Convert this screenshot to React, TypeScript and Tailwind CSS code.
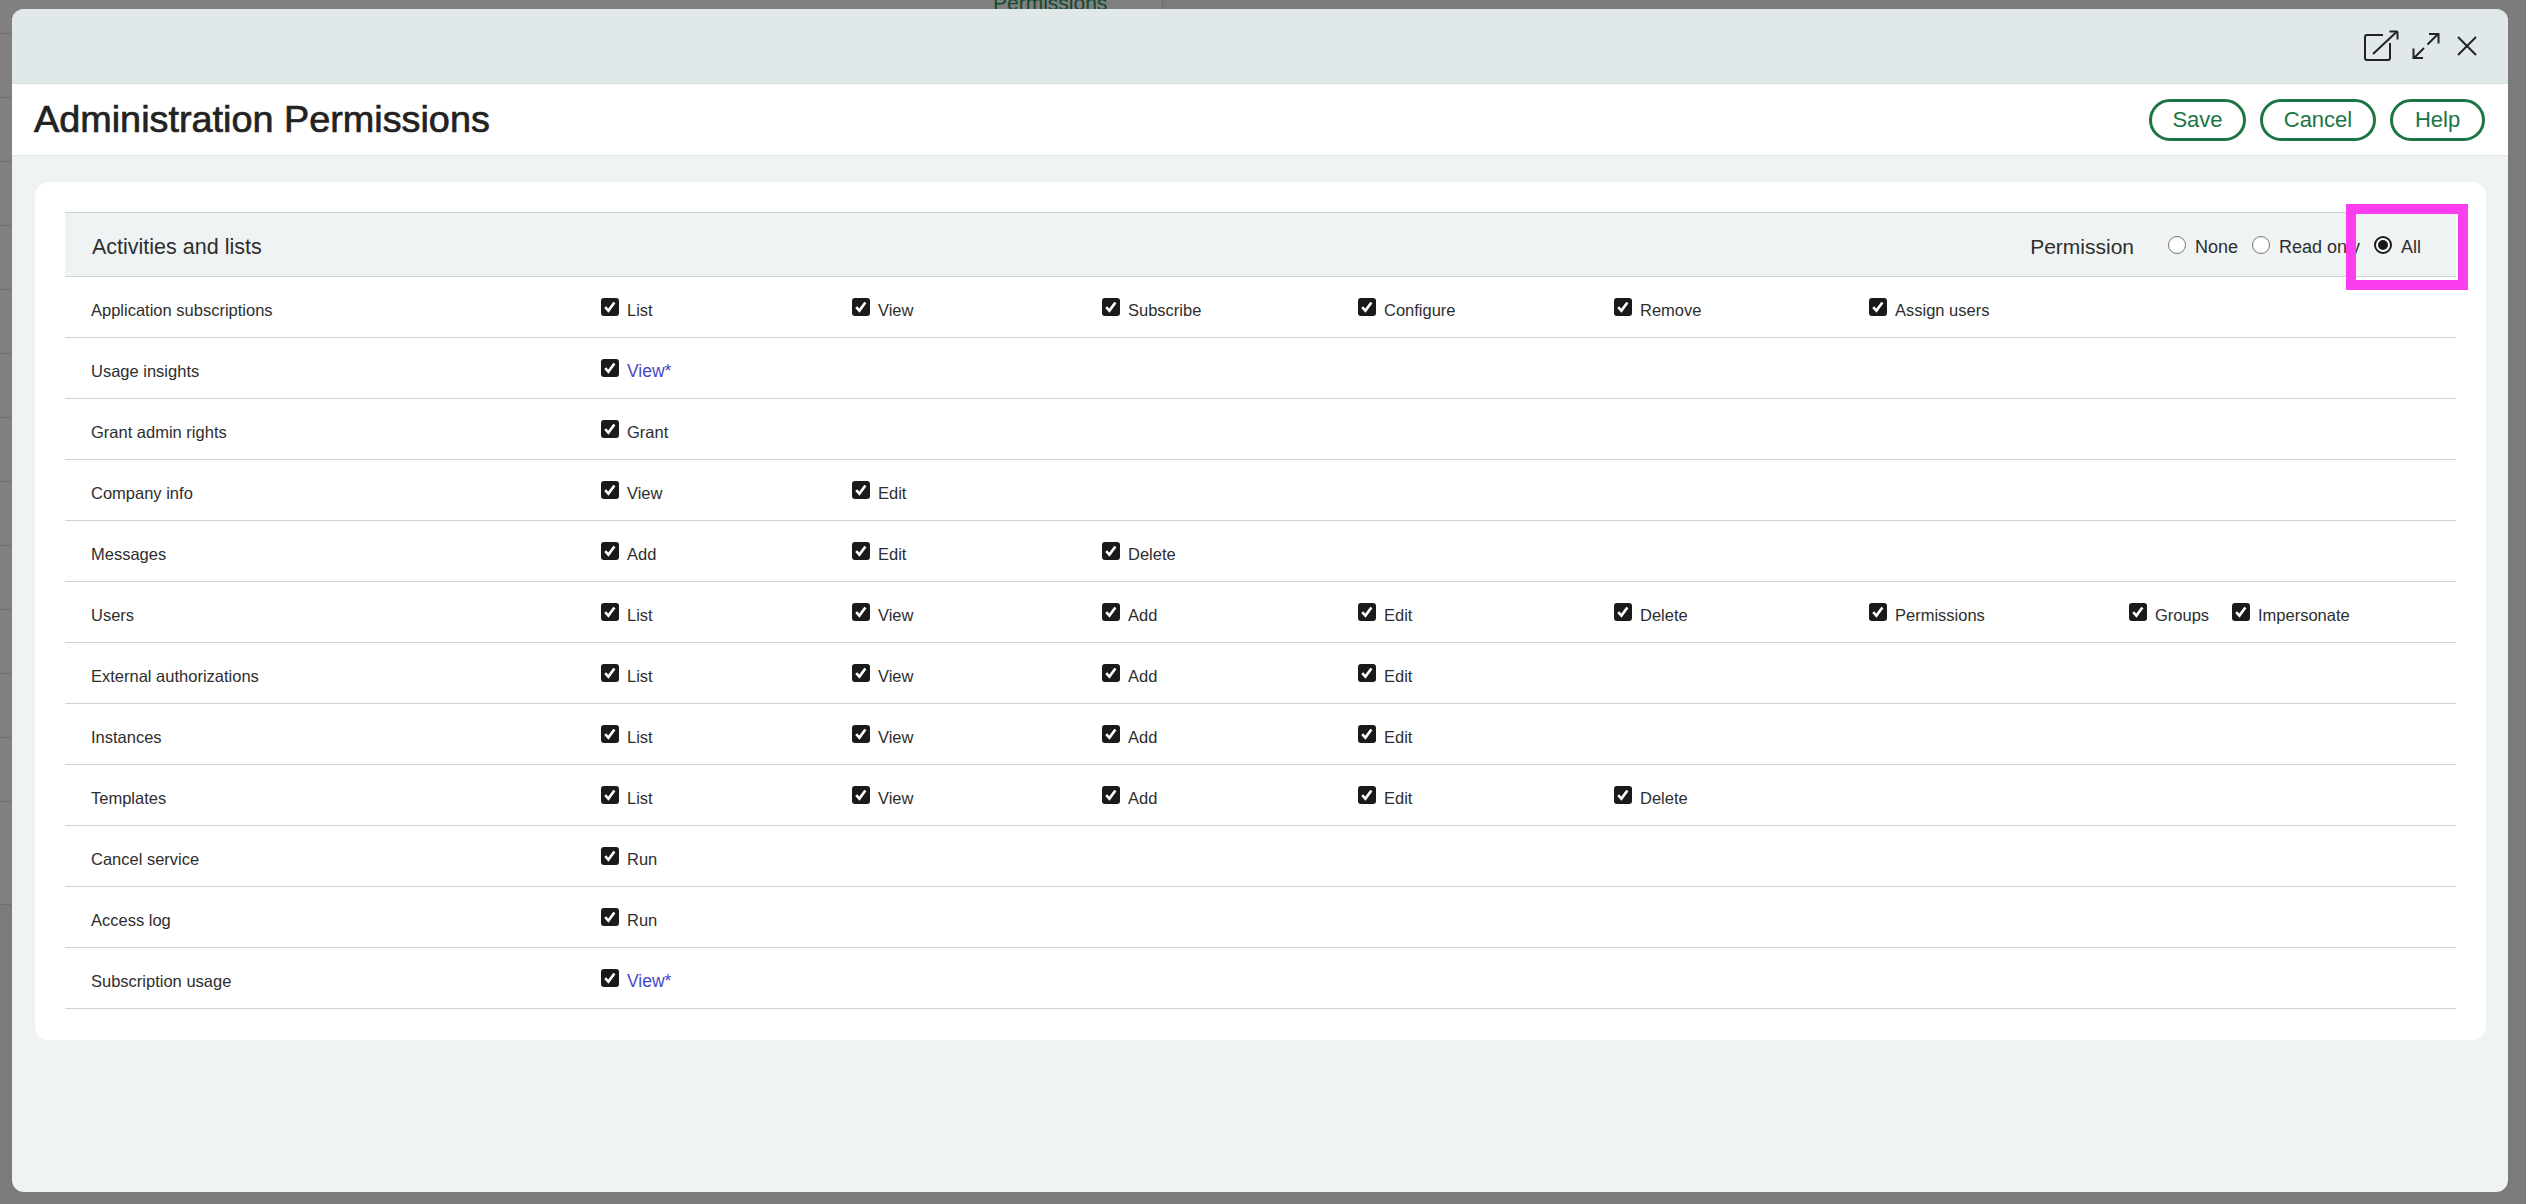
const LABEL_FONT = "font-['Liberation_Sans',Arial,sans-serif]"

type Item = { text: string; link?: boolean }

const rows: { name: string; items: (string | Item)[] }[] = [
  { name: 'Application subscriptions', items: ['List', 'View', 'Subscribe', 'Configure', 'Remove', 'Assign users'] },
  { name: 'Usage insights', items: [{ text: 'View*', link: true }] },
  { name: 'Grant admin rights', items: ['Grant'] },
  { name: 'Company info', items: ['View', 'Edit'] },
  { name: 'Messages', items: ['Add', 'Edit', 'Delete'] },
  { name: 'Users', items: ['List', 'View', 'Add', 'Edit', 'Delete', 'Permissions', 'Groups', 'Impersonate'] },
  { name: 'External authorizations', items: ['List', 'View', 'Add', 'Edit'] },
  { name: 'Instances', items: ['List', 'View', 'Add', 'Edit'] },
  { name: 'Templates', items: ['List', 'View', 'Add', 'Edit', 'Delete'] },
  { name: 'Cancel service', items: ['Run'] },
  { name: 'Access log', items: ['Run'] },
  { name: 'Subscription usage', items: [{ text: 'View*', link: true }] },
]

function Checkbox() {
  return (
    <span className="flex h-[18px] w-[18px] shrink-0 items-center justify-center rounded-[3px] bg-[#1a1a1a]">
      <svg viewBox="0 0 18 18" className="h-[18px] w-[18px]" fill="none" stroke="#fff" strokeWidth="2.6">
        <path d="M4.2 9.2 7.4 12.6 13.4 4.4" />
      </svg>
    </span>
  )
}

function Check({ item }: { item: string | Item }) {
  const text = typeof item === 'string' ? item : item.text
  const link = typeof item !== 'string' && item.link
  return (
    <label className="flex items-start">
      <span className="mt-[21px]">
        <Checkbox />
      </span>
      {link ? (
        <span className="ml-[8px] mt-[21px] text-[17.5px] leading-[24px] text-[#4747c8]">{text}</span>
      ) : (
        <span className="ml-[8px] mt-[21px] text-[16.5px] leading-[24px] text-[#2e2e2e]">{text}</span>
      )}
    </label>
  )
}

function Radio({ checked, label }: { checked?: boolean; label: string }) {
  return (
    <label className="flex items-start">
      <span
        className={
          checked
            ? 'flex h-[18px] w-[18px] items-center justify-center rounded-full border-2 border-[#1a1a1a] bg-white'
            : 'h-[18px] w-[18px] rounded-full border border-[#767676] bg-white'
        }
      >
        {checked && <span className="h-[10px] w-[10px] rounded-full bg-[#1a1a1a]" />}
      </span>
      <span className="ml-[9px] mt-[-1px] whitespace-nowrap text-[18px] leading-[24px] text-[#2e2e2e]">{label}</span>
    </label>
  )
}

function PillButton({ label, width }: { label: string; width: string }) {
  return (
    <button
      className={`flex h-[42px] ${width} items-center justify-center rounded-full border-[3px] border-[#1b7544] bg-white text-[22px] text-[#1b7544]`}
    >
      {label}
    </button>
  )
}

function Backdrop() {
  return (
    <div className="absolute inset-0 flex bg-[#7a7b7a]">
      <div className="h-[904px] w-[1163px] border-r border-[#6c6c6c] bg-[#808080]">
        <div className="flex flex-col pt-[33px]">
          {Array.from({ length: 13 }).map((_, i) => (
            <div key={i} className="h-[64px] w-[12px] border-t border-[#6f6f6f]" />
          ))}
          <div className="mt-[39px] h-[1px] w-[12px] bg-[#6f6f6f]" />
        </div>
      </div>
      <span className="absolute left-[993px] top-[-10px] text-[21px] leading-[26px] text-[#0f4a2a]">Permissions</span>
    </div>
  )
}

function ModalIcons() {
  return (
    <div className="flex items-center justify-end pr-[31px] pt-[21px]">
      <svg width="36" height="32" viewBox="0 0 36 32" fill="none" stroke="#222" strokeWidth="2" className="mr-[12px]">
        <path d="M19 5H3a2 2 0 0 0-2 2v21a2 2 0 0 0 2 2h21a2 2 0 0 0 2-2V13" />
        <path d="M9 24 33 1.5" />
        <path d="M25.5 1.5h7a1 1 0 0 1 1 1v7" />
      </svg>
      <svg width="28" height="28" viewBox="0 0 28 28" fill="none" stroke="#222" strokeWidth="2" className="mr-[17px]">
        <path d="M2 26 12 16" />
        <path d="M15.5 12.5 26 2" />
        <path d="M17 2h9.5v9.5" />
        <path d="M1.5 16.5V26H11" />
      </svg>
      <svg width="20" height="20" viewBox="0 0 20 20" fill="none" stroke="#222" strokeWidth="2">
        <path d="M1 1 19 19" />
        <path d="M19 1 1 19" />
      </svg>
    </div>
  )
}

export default function App() {
  return (
    <div className={`relative h-[1204px] w-[2526px] overflow-hidden ${LABEL_FONT}`}>
      <Backdrop />

      <div className="absolute left-[12px] top-[9px] flex h-[1183px] w-[2496px] flex-col overflow-hidden rounded-[12px] bg-[#eff3f4]">
        <div className="h-[75px] border-b border-[#d5dfe2] bg-[#e0e8ea]">
          <ModalIcons />
        </div>
        <div className="flex h-[72px] items-center justify-between border-b border-[#dfe6e8] bg-white pl-[22px] pr-[23px]">
          <h1 className="text-[37.8px] text-[#222] [-webkit-text-stroke:0.7px_#222]">Administration Permissions</h1>
          <div className="flex gap-[14px]">
            <PillButton label="Save" width="w-[97px]" />
            <PillButton label="Cancel" width="w-[116px]" />
            <PillButton label="Help" width="w-[95px]" />
          </div>
        </div>

        <div className="px-[23px] pt-[26px]">
          <div className="h-[858px] w-[2451px] rounded-[14px] bg-white pl-[30px] pr-[30px] pt-[30px]">
            <div className="flex h-[65px] items-start justify-between border-y border-[#c8d3d9] bg-[#eff3f4] pl-[27px] pt-[19px]">
              <span className="text-[21.5px] leading-[30px] text-[#2e2e2e]">Activities and lists</span>
              <div className="flex items-start">
                <span className="mr-[34px] text-[21px] leading-[30px] text-[#2e2e2e]">Permission</span>
                <div className="mt-[4px] flex w-[288px] pr-[32px]">
                  <div className="w-[84px]">
                    <Radio label="None" />
                  </div>
                  <div className="w-[122px]">
                    <Radio label="Read only" />
                  </div>
                  <Radio checked label="All" />
                </div>
              </div>
            </div>

            {rows.map((row) => (
              <div
                key={row.name}
                className="grid h-[61px] grid-cols-[536px_251px_250px_256px_256px_255px_260px_103px_auto] border-b border-[#c8d3d9]"
              >
                <span className="pl-[26px] pt-[21px] text-[16.5px] leading-[24px] text-[#2e2e2e]">{row.name}</span>
                {row.items.map((item, i) => (
                  <Check key={i} item={item} />
                ))}
              </div>
            ))}
          </div>
        </div>
      </div>

      {/* Annotation box drawn over the screenshot */}
      <div className="absolute left-[2346px] top-[204px] h-[86px] w-[122px] border-[10px] border-[#fb3df0]" />
    </div>
  )
}
